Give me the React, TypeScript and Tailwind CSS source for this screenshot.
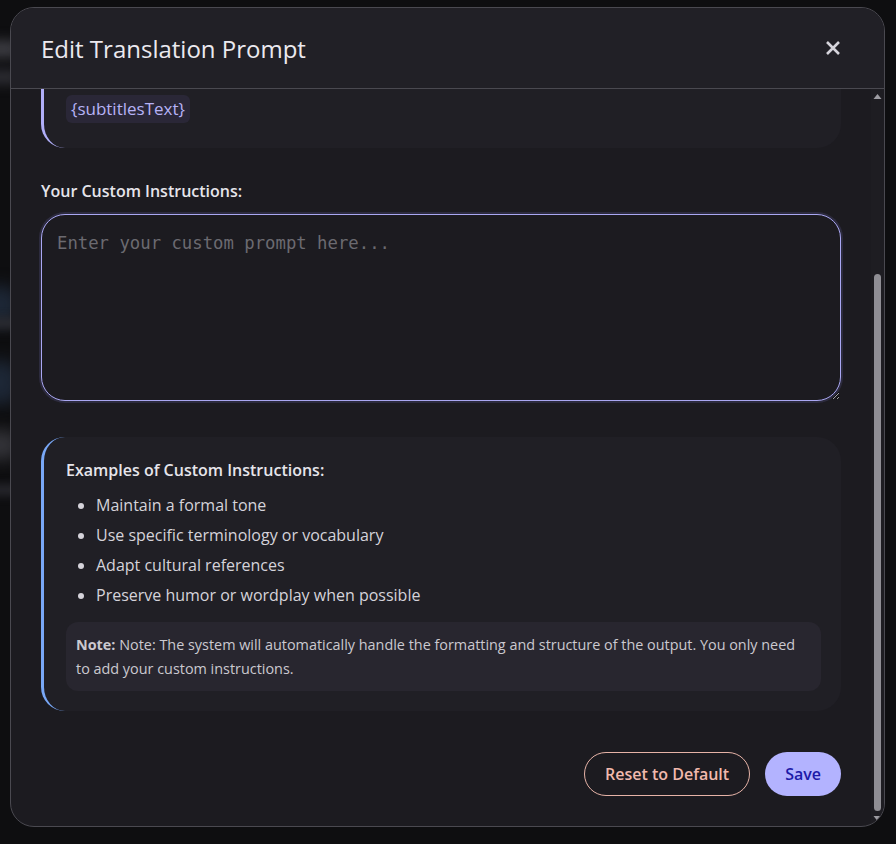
import React from "react";

const font = { fontFamily: "'Open Sans', 'Noto Sans', Arial, sans-serif" };

function CloseIcon() {
  return (
    <svg width="16" height="16" viewBox="0 0 16 16" fill="none">
      <path d="M2 2 L14 14 M14 2 L2 14" stroke="#d6d4db" strokeWidth="2.6" strokeLinecap="butt" />
    </svg>
  );
}

function FakeScrollbar() {
  return (
    <div className="absolute right-0 top-0 bottom-0 w-[13px] bg-[#1e1d22] flex flex-col items-center">
      <svg width="11" height="14" viewBox="0 0 11 14" className="shrink-0">
        <path d="M1.5 10 L5.5 5 L9.5 10 Z" fill="#9d9ca2" />
      </svg>
      <div className="flex-1 w-full flex flex-col items-center pt-[171px] pb-[1px]">
        <div className="w-[7px] flex-1 rounded-full bg-[#8f8e94]" />
      </div>
      <svg width="11" height="14" viewBox="0 0 11 14" className="shrink-0">
        <path d="M1.5 4 L5.5 9 L9.5 4 Z" fill="#9d9ca2" />
      </svg>
    </div>
  );
}

export default function App() {
  const examples = [
    "Maintain a formal tone",
    "Use specific terminology or vocabulary",
    "Adapt cultural references",
    "Preserve humor or wordplay when possible",
  ];
  return (
    <div className="relative min-h-[844px] w-full bg-[#0e0e10] overflow-hidden" style={font}>
      {/* blurred backdrop */}
      <div className="absolute inset-0 pointer-events-none">
        <div className="absolute left-[-20px] top-[40px] w-[40px] h-[18px] rounded-full bg-[#3a3a40] blur-[6px]" />
        <div className="absolute left-[-20px] top-[70px] w-[40px] h-[14px] rounded-full bg-[#2e2e34] blur-[6px]" />
        <div className="absolute left-[-20px] top-[285px] w-[40px] h-[40px] rounded-full bg-[#1d2736] blur-[8px]" />
        <div className="absolute left-[-20px] top-[318px] w-[40px] h-[10px] rounded-full bg-[#2e2e34] blur-[5px]" />
        <div className="absolute left-[-20px] top-[360px] w-[40px] h-[45px] rounded-full bg-[#1d2736] blur-[8px]" />
        <div className="absolute left-[-20px] top-[430px] w-[40px] h-[30px] rounded-full bg-[#333338] blur-[8px]" />
        <div className="absolute left-[-20px] top-[485px] w-[40px] h-[10px] rounded-full bg-[#2a2a30] blur-[5px]" />
      </div>

      <div className="relative pl-[10px] pt-[7px]">
        <div className="w-[875px] h-[820px] rounded-[24px] border border-[#4a4950] bg-[#1c1b20] flex flex-col overflow-hidden">
          {/* header */}
          <div className="h-[81px] shrink-0 bg-[#212026] border-b border-[#4a4950] flex items-center justify-between pl-[30px] pr-[43px]">
            <h2 className="text-[24px] leading-[32px] text-[#ebe9ef] font-normal pt-[1px]">Edit Translation Prompt</h2>
            <button className="w-[16px] h-[16px] flex items-center justify-center">
              <CloseIcon />
            </button>
          </div>

          {/* body */}
          <div className="relative flex-1 overflow-hidden flex flex-col justify-end">
            <div className="shrink-0 flex flex-col pl-[30px] pr-[43px] pb-[30px]">
              {/* default prompt card (scrolled mostly out of view) */}
              <div className="rounded-[24px] border-l-[3px] border-[#b0aef8] bg-[#201f25] pl-[22px] pr-[20px] pt-[200px] pb-[25px]">
                <span className="inline-flex items-center h-[28px] px-[5px] rounded-[6px] bg-[#2a2737] text-[17px] text-[#b6b2f6]">
                  {"{subtitlesText}"}
                </span>
              </div>

              <label className="mt-[31px] text-[16px] leading-[24px] font-semibold text-[#e6e5eb]">
                Your Custom Instructions:
              </label>

              <textarea
                placeholder="Enter your custom prompt here..."
                className="mt-[11px] h-[187px] w-full rounded-[24px] border border-[#aaa7f2] bg-[#1c1b20] px-[15px] pt-[16px] text-[17.3px] leading-[24px] text-[#e6e5eb] placeholder:text-[#6b6a70] outline-none shadow-[0_0_0_2px_rgba(120,116,200,0.18)]"
                style={{ fontFamily: "'DejaVu Sans Mono', 'Liberation Mono', monospace", colorScheme: "dark" }}
              />

              {/* examples card */}
              <div className="mt-[36px] rounded-[24px] border-l-[3px] border-[#79a8f7] bg-[#201f25] pl-[22px] pr-[20px] pt-[21px] pb-[20px]">
                <div className="text-[16px] leading-[24px] font-semibold text-[#e6e5eb]">Examples of Custom Instructions:</div>
                <ul className="mt-[8px] list-disc pl-[30px] text-[16px] leading-[30px] text-[#d5d3da] marker:text-[#d5d3da]">
                  {examples.map((e) => (
                    <li key={e}>{e}</li>
                  ))}
                </ul>
                <p className="mt-[12px] rounded-[12px] bg-[#28262f] px-[10px] pt-[11px] pb-[10px] text-[14.4px] leading-[24px] text-[#cbc9d0]">
                  <strong className="font-bold">Note:</strong> Note: The system will automatically handle the formatting and structure of the output. You only need to add your custom instructions.
                </p>
              </div>

              {/* footer buttons */}
              <div className="mt-[41px] flex justify-end gap-[15px]">
                <button className="h-[44px] px-[20px] rounded-full border border-[#e6b3a7] text-[16px] font-semibold text-[#f1b9ad]">
                  Reset to Default
                </button>
                <button className="h-[44px] px-[20px] rounded-full bg-[#b3b3ff] text-[16px] font-semibold text-[#1d1aa8]">
                  Save
                </button>
              </div>
            </div>

            <FakeScrollbar />
          </div>
        </div>
      </div>
    </div>
  );
}
